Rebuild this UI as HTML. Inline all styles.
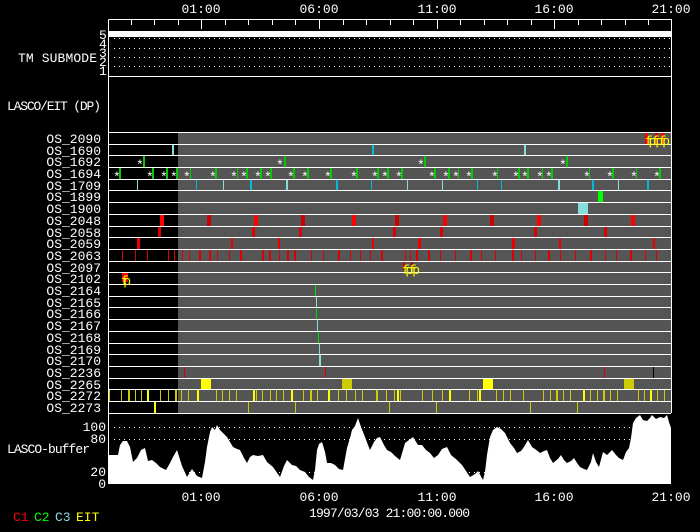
<!DOCTYPE html>
<html><head><meta charset="utf-8"><style>
html,body{margin:0;padding:0;background:#000;}
svg{display:block}
text{font-family:"Liberation Mono","DejaVu Sans Mono",monospace;font-size:13px;fill:#fff}
</style></head><body>
<svg width="700" height="532" viewBox="0 0 700 532" xmlns="http://www.w3.org/2000/svg">
<rect width="700" height="532" fill="#000"/>
<g fill="#fff">
<text x="201" y="13" text-anchor="middle">01:00</text>
<text x="319" y="13" text-anchor="middle">06:00</text>
<text x="437" y="13" text-anchor="middle">11:00</text>
<text x="554" y="13" text-anchor="middle">16:00</text>
<text x="671" y="13" text-anchor="middle">21:00</text>
</g>
<g stroke="#fff" stroke-width="1" fill="none">
<path d="M108.5 19.5H671.5V413M108.5 19.5V413"/>
<path d="M131.5 19v6M154.5 19v6M178.5 19v6M201.5 19v10M225.5 19v6M248.5 19v6M272.5 19v6M295.5 19v6M319.5 19v10M343.5 19v6M366.5 19v6M390.5 19v6M413.5 19v6M437.5 19v10M460.5 19v6M484.5 19v6M507.5 19v6M531.5 19v6M554.5 19v10M578.5 19v6M601.5 19v6M625.5 19v6M648.5 19v6"/>
<path d="M108 76.5H671M108 132.5H671"/>
</g>
<rect x="109" y="31" width="562" height="6" fill="#fff"/>
<g stroke="#fff" stroke-width="1" stroke-dasharray="1 4">
<path d="M114 38.5H671M114 48.5H671M114 57.5H671M114 66.5H671"/>
</g>
<text x="18" y="62" textLength="79">TM SUBMODE</text>
<g font-size="11">
<text x="99" y="39">5</text><text x="99" y="48">4</text><text x="99" y="57">3</text><text x="99" y="66">2</text><text x="99" y="75">1</text>
</g>
<text x="7" y="110" textLength="94">LASCO/EIT (DP)</text>
<rect x="178" y="133" width="493" height="280" fill="#555"/>
<g stroke="#fff" stroke-width="1">
<path d="M108 144.5H671M108 155.5H671M108 167.5H671M108 179.5H671M108 190.5H671M108 202.5H671M108 214.5H671M108 226.5H671M108 237.5H671M108 249.5H671M108 261.5H671M108 272.5H671M108 284.5H671M108 296.5H671M108 307.5H671M108 319.5H671M108 331.5H671M108 343.5H671M108 354.5H671M108 366.5H671M108 378.5H671M108 389.5H671M108 401.5H671M108 413.5H671"/>
</g>
<g text-anchor="end">
<text x="101" y="143">OS_2090</text><text x="101" y="155">OS_1690</text><text x="101" y="166">OS_1692</text><text x="101" y="178">OS_1694</text><text x="101" y="190">OS_1709</text><text x="101" y="201">OS_1899</text><text x="101" y="213">OS_1900</text><text x="101" y="225">OS_2048</text><text x="101" y="237">OS_2058</text><text x="101" y="248">OS_2059</text><text x="101" y="260">OS_2063</text><text x="101" y="272">OS_2097</text><text x="101" y="283">OS_2102</text><text x="101" y="295">OS_2164</text><text x="101" y="307">OS_2165</text><text x="101" y="318">OS_2166</text><text x="101" y="330">OS_2167</text><text x="101" y="342">OS_2168</text><text x="101" y="354">OS_2169</text><text x="101" y="365">OS_2170</text><text x="101" y="377">OS_2236</text><text x="101" y="389">OS_2265</text><text x="101" y="400">OS_2272</text><text x="101" y="412">OS_2273</text>
</g>
<rect x="645" y="133" width="3" height="11" fill="#f00"/><rect x="655" y="133" width="3" height="11" fill="#c00"/><rect x="661" y="133" width="3" height="11" fill="#f00"/>
<text x="645" y="145" font-size="10" textLength="25" style="fill:#ff0">fpfpfp</text>
<g fill="#8dd"><rect x="172" y="145" width="2" height="10"/><rect x="524" y="145" width="2" height="10"/></g>
<rect x="372" y="145" width="2" height="10" fill="#0bd"/>
<g fill="#0c0"><rect x="143" y="156" width="2" height="11"/><rect x="284" y="156" width="2" height="11"/><rect x="424" y="156" width="2" height="11"/><rect x="566" y="156" width="2" height="11"/></g>
<g font-size="10"><text x="136" y="169">*</text><text x="276" y="169">*</text><text x="417" y="169">*</text><text x="559" y="169">*</text></g>
<g fill="#0c0">
<rect x="119" y="168" width="2" height="11"/><rect x="152" y="168" width="2" height="11"/><rect x="166" y="168" width="2" height="11"/><rect x="176" y="168" width="2" height="11"/><rect x="190" y="168" width="1" height="11"/><rect x="215" y="168" width="2" height="11"/><rect x="237" y="168" width="1" height="11"/><rect x="246" y="168" width="2" height="11"/><rect x="260" y="168" width="2" height="11"/><rect x="270" y="168" width="2" height="11"/><rect x="293" y="168" width="2" height="11"/><rect x="307" y="168" width="2" height="11"/><rect x="330" y="168" width="2" height="11"/><rect x="356" y="168" width="2" height="11"/><rect x="377" y="168" width="2" height="11"/><rect x="387" y="168" width="2" height="11"/><rect x="401" y="168" width="2" height="11"/><rect x="434" y="168" width="2" height="11"/><rect x="448" y="168" width="2" height="11"/><rect x="458" y="168" width="1" height="11"/><rect x="471" y="168" width="2" height="11"/><rect x="497" y="168" width="1" height="11"/><rect x="518" y="168" width="2" height="11"/><rect x="527" y="168" width="2" height="11"/><rect x="542" y="168" width="1" height="11"/><rect x="551" y="168" width="2" height="11"/><rect x="589" y="168" width="1" height="11"/><rect x="612" y="168" width="2" height="11"/><rect x="636" y="168" width="1" height="11"/><rect x="659" y="168" width="2" height="11"/>
</g>
<g font-size="10">
<text x="113" y="181">*</text><text x="146" y="181">*</text><text x="160" y="181">*</text><text x="170" y="181">*</text><text x="183" y="181">*</text><text x="209" y="181">*</text><text x="230" y="181">*</text><text x="240" y="181">*</text><text x="254" y="181">*</text><text x="264" y="181">*</text><text x="287" y="181">*</text><text x="301" y="181">*</text><text x="324" y="181">*</text><text x="350" y="181">*</text><text x="371" y="181">*</text><text x="381" y="181">*</text><text x="395" y="181">*</text><text x="428" y="181">*</text><text x="442" y="181">*</text><text x="452" y="181">*</text><text x="465" y="181">*</text><text x="491" y="181">*</text><text x="512" y="181">*</text><text x="521" y="181">*</text><text x="536" y="181">*</text><text x="545" y="181">*</text><text x="583" y="181">*</text><text x="606" y="181">*</text><text x="630" y="181">*</text><text x="653" y="181">*</text>
</g>
<g fill="#8dd"><rect x="137" y="180" width="1" height="10"/><rect x="223" y="180" width="1" height="10"/><rect x="286" y="180" width="2" height="10"/><rect x="407" y="180" width="1" height="10"/><rect x="442" y="180" width="1" height="10"/><rect x="558" y="180" width="2" height="10"/><rect x="618" y="180" width="1" height="10"/></g>
<g fill="#0bd"><rect x="196" y="180" width="1" height="10"/><rect x="250" y="180" width="2" height="10"/><rect x="336" y="180" width="2" height="10"/><rect x="371" y="180" width="1" height="10"/><rect x="477" y="180" width="1" height="10"/><rect x="501" y="180" width="1" height="10"/><rect x="592" y="180" width="2" height="10"/><rect x="647" y="180" width="2" height="10"/></g>
<rect x="598" y="191" width="5" height="11" fill="#0f0"/>
<rect x="578" y="203" width="10" height="11" fill="#8dd"/>
<g fill="#f00"><rect x="160" y="215" width="4" height="11"/><rect x="254" y="215" width="4" height="11"/><rect x="352" y="215" width="4" height="11"/><rect x="443" y="215" width="4" height="11"/><rect x="537" y="215" width="4" height="11"/><rect x="631" y="215" width="4" height="11"/></g>
<g fill="#c00"><rect x="207" y="215" width="4" height="11"/><rect x="301" y="215" width="4" height="11"/><rect x="395" y="215" width="4" height="11"/><rect x="490" y="215" width="4" height="11"/><rect x="584" y="215" width="4" height="11"/></g>
<g fill="#d00"><rect x="158" y="227" width="3" height="10"/><rect x="252" y="227" width="3" height="10"/><rect x="299" y="227" width="3" height="10"/><rect x="393" y="227" width="3" height="10"/><rect x="440" y="227" width="3" height="10"/><rect x="534" y="227" width="3" height="10"/><rect x="604" y="227" width="3" height="10"/></g>
<g fill="#e00"><rect x="137" y="238" width="3" height="11"/><rect x="231" y="238" width="2" height="11"/><rect x="278" y="238" width="2" height="11"/><rect x="372" y="238" width="2" height="11"/><rect x="418" y="238" width="3" height="11"/><rect x="512" y="238" width="3" height="11"/><rect x="559" y="238" width="2" height="11"/><rect x="653" y="238" width="2" height="11"/></g>
<g fill="#d00">
<rect x="122" y="250" width="1" height="11"/><rect x="135" y="250" width="1" height="11"/><rect x="147" y="250" width="1" height="11"/><rect x="168" y="250" width="1" height="11"/><rect x="174" y="250" width="1" height="11"/><rect x="182" y="250" width="1" height="11"/><rect x="189" y="250" width="1" height="11"/><rect x="199" y="250" width="2" height="11"/><rect x="209" y="250" width="2" height="11"/><rect x="217" y="250" width="1" height="11"/><rect x="229" y="250" width="1" height="11"/><rect x="240" y="250" width="2" height="11"/><rect x="262" y="250" width="2" height="11"/><rect x="269" y="250" width="2" height="11"/><rect x="279" y="250" width="1" height="11"/><rect x="287" y="250" width="2" height="11"/><rect x="294" y="250" width="2" height="11"/><rect x="311" y="250" width="1" height="11"/><rect x="323" y="250" width="1" height="11"/><rect x="338" y="250" width="2" height="11"/><rect x="350" y="250" width="1" height="11"/><rect x="360" y="250" width="1" height="11"/><rect x="370" y="250" width="1" height="11"/><rect x="381" y="250" width="2" height="11"/><rect x="405" y="250" width="1" height="11"/><rect x="410" y="250" width="1" height="11"/><rect x="416" y="250" width="2" height="11"/><rect x="428" y="250" width="2" height="11"/><rect x="440" y="250" width="1" height="11"/><rect x="455" y="250" width="1" height="11"/><rect x="470" y="250" width="2" height="11"/><rect x="481" y="250" width="1" height="11"/><rect x="495" y="250" width="1" height="11"/><rect x="512" y="250" width="2" height="11"/><rect x="521" y="250" width="1" height="11"/><rect x="535" y="250" width="1" height="11"/><rect x="548" y="250" width="2" height="11"/><rect x="560" y="250" width="1" height="11"/><rect x="575" y="250" width="1" height="11"/><rect x="590" y="250" width="2" height="11"/><rect x="605" y="250" width="1" height="11"/><rect x="616" y="250" width="1" height="11"/><rect x="630" y="250" width="2" height="11"/><rect x="645" y="250" width="1" height="11"/><rect x="656" y="250" width="1" height="11"/>
</g>
<rect x="403" y="262" width="2" height="8" fill="#d00"/><rect x="411" y="262" width="2" height="6" fill="#a00"/>
<text x="402" y="274" font-size="10" textLength="18" style="fill:#ff0">fpfp</text>
<rect x="122" y="273" width="6" height="9" fill="#e00"/>
<text x="121" y="285" font-size="10" textLength="10" style="fill:#ff0">fp</text>
<rect x="315" y="285" width="1" height="11" fill="#0d0"/><rect x="316" y="297" width="1" height="10" fill="#8dd"/><rect x="316" y="308" width="1" height="11" fill="#0d0"/><rect x="317" y="320" width="1" height="11" fill="#8dd"/><rect x="318" y="332" width="1" height="11" fill="#0d0"/><rect x="319" y="344" width="1" height="10" fill="#8dd"/><rect x="319" y="355" width="2" height="11" fill="#8dd"/>
<g fill="#d00"><rect x="184" y="367" width="1" height="11"/><rect x="325" y="367" width="1" height="11"/><rect x="604" y="367" width="1" height="11"/></g>
<rect x="653" y="367" width="1" height="11" fill="#000"/>
<rect x="201" y="379" width="10" height="10" fill="#ff0"/><rect x="342" y="379" width="10" height="10" fill="#cc0"/><rect x="483" y="379" width="10" height="10" fill="#ff0"/><rect x="624" y="379" width="10" height="10" fill="#cc0"/>
<g fill="#cc0">
<rect x="109" y="390" width="1" height="11"/><rect x="121" y="390" width="1" height="11"/><rect x="128" y="390" width="2" height="11"/><rect x="135" y="390" width="1" height="11"/><rect x="141" y="390" width="1" height="11"/><rect x="160" y="390" width="1" height="11"/><rect x="168" y="390" width="1" height="11"/><rect x="175" y="390" width="2" height="11"/><rect x="181" y="390" width="1" height="11"/><rect x="188" y="390" width="1" height="11"/><rect x="216" y="390" width="1" height="11"/><rect x="222" y="390" width="1" height="11"/><rect x="229" y="390" width="1" height="11"/><rect x="236" y="390" width="1" height="11"/><rect x="256" y="390" width="1" height="11"/><rect x="262" y="390" width="1" height="11"/><rect x="270" y="390" width="1" height="11"/><rect x="276" y="390" width="1" height="11"/><rect x="283" y="390" width="1" height="11"/><rect x="303" y="390" width="1" height="11"/><rect x="310" y="390" width="2" height="11"/><rect x="317" y="390" width="1" height="11"/><rect x="328" y="390" width="1" height="11"/><rect x="338" y="390" width="1" height="11"/><rect x="346" y="390" width="1" height="11"/><rect x="355" y="390" width="1" height="11"/><rect x="362" y="390" width="1" height="11"/><rect x="376" y="390" width="2" height="11"/><rect x="386" y="390" width="1" height="11"/><rect x="394" y="390" width="1" height="11"/><rect x="400" y="390" width="1" height="11"/><rect x="422" y="390" width="1" height="11"/><rect x="432" y="390" width="1" height="11"/><rect x="442" y="390" width="1" height="11"/><rect x="469" y="390" width="1" height="11"/><rect x="477" y="390" width="1" height="11"/><rect x="496" y="390" width="1" height="11"/><rect x="503" y="390" width="1" height="11"/><rect x="510" y="390" width="1" height="11"/><rect x="523" y="390" width="1" height="11"/><rect x="543" y="390" width="1" height="11"/><rect x="550" y="390" width="1" height="11"/><rect x="556" y="390" width="2" height="11"/><rect x="563" y="390" width="1" height="11"/><rect x="570" y="390" width="1" height="11"/><rect x="590" y="390" width="1" height="11"/><rect x="597" y="390" width="1" height="11"/><rect x="603" y="390" width="2" height="11"/><rect x="610" y="390" width="1" height="11"/><rect x="617" y="390" width="1" height="11"/><rect x="638" y="390" width="1" height="11"/><rect x="644" y="390" width="1" height="11"/><rect x="657" y="390" width="1" height="11"/><rect x="664" y="390" width="1" height="11"/>
</g>
<g fill="#ff0">
<rect x="147" y="390" width="2" height="11"/><rect x="197" y="390" width="2" height="11"/><rect x="253" y="390" width="2" height="11"/><rect x="291" y="390" width="2" height="11"/><rect x="328" y="390" width="2" height="11"/><rect x="397" y="390" width="2" height="11"/><rect x="449" y="390" width="2" height="11"/><rect x="479" y="390" width="2" height="11"/><rect x="583" y="390" width="2" height="11"/><rect x="650" y="390" width="2" height="11"/>
</g>
<rect x="154" y="402" width="2" height="11" fill="#ff0"/>
<g fill="#cc0"><rect x="248" y="402" width="1" height="11"/><rect x="295" y="402" width="1" height="11"/><rect x="389" y="402" width="1" height="11"/><rect x="436" y="402" width="1" height="11"/><rect x="530" y="402" width="1" height="11"/><rect x="577" y="402" width="1" height="11"/></g>
<g stroke="#fff" stroke-width="1" stroke-dasharray="1 4">
<path d="M114 427.5H671M114 439.5H671M114 472.5H671"/>
</g>
<polygon fill="#fff" points="109,484 109,455 118,455 120,445 123,441 127,441 130,447 133,462 137,458 141,450 145,448 148,461 152,460 156,463 160,467 166,470 170,463 173,457 177,450 182,466 187,477 192,469 197,476 202,478 205,462 207,447 210,432 212,427 215,430 217,425 220,430 224,434 227,437 230,442 233,447 237,449 240,450 244,458 247,463 250,457 253,455 258,456 263,455 267,462 273,467 280,477 284,466 287,460 292,465 296,466 300,470 305,472 309,477 313,480 315,470 317,450 319,444 322,442 325,452 327,463 331,463 335,465 339,469 343,470 347,448 350,438 352,430 355,426 358,418 361,427 365,437 368,445 370,450 374,442 377,438 380,437 384,445 387,450 391,452 395,456 400,460 403,450 405,443 409,440 413,437 418,445 422,445 426,450 430,453 434,458 438,455 442,449 447,447 451,455 457,460 462,465 466,471 470,477 475,474 478,471 483,480 485,472 487,455 490,437 493,430 497,427 501,429 505,433 510,443 514,448 517,453 521,451 524,447 528,440 532,447 535,449 540,453 544,451 547,450 550,458 553,463 558,459 561,455 564,460 567,463 571,461 574,458 577,463 580,467 584,469 587,470 591,462 593,453 596,462 599,467 603,452 607,455 612,450 616,455 619,458 623,460 626,452 629,448 631,438 633,423 636,418 640,415 643,420 647,421 650,418 652,415 656,419 660,417 664,418 667,415 669,422 671,428 671,484"/>
<path d="M108.5 413V484" stroke="#fff" fill="none"/>
<g>
<text x="106" y="431" text-anchor="end">100</text>
<text x="106" y="443" text-anchor="end">80</text>
<text x="7" y="453" textLength="83">LASCO-buffer</text>
<text x="106" y="476" text-anchor="end">20</text>
<text x="106" y="488" text-anchor="end">0</text>
</g>
<g>
<text x="201" y="501" text-anchor="middle">01:00</text>
<text x="319" y="501" text-anchor="middle">06:00</text>
<text x="437" y="501" text-anchor="middle">11:00</text>
<text x="554" y="501" text-anchor="middle">16:00</text>
<text x="671" y="501" text-anchor="middle">21:00</text>
<text x="309" y="517" textLength="161">1997/03/03 21:00:00.000</text>
</g>
<g font-size="11">
<text x="13" y="521" style="fill:#f00">C1</text>
<text x="34" y="521" style="fill:#0f0">C2</text>
<text x="55" y="521" style="fill:#8dd">C3</text>
<text x="76" y="521" style="fill:#ff0">EIT</text>
</g>
</svg>
</body></html>
